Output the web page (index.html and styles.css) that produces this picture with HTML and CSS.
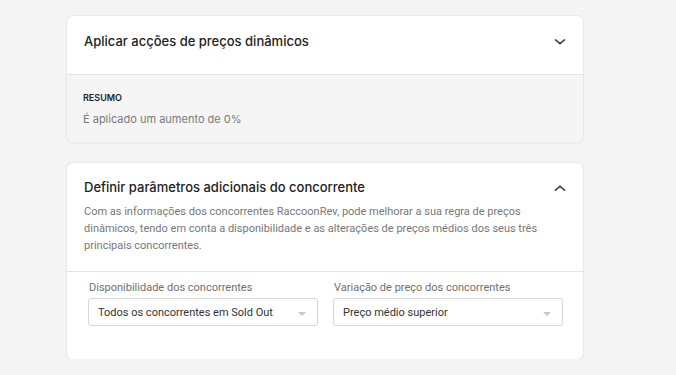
FILE: index.html
```html
<!DOCTYPE html>
<html lang="pt">
<head>
  <meta charset="UTF-8" />
  <meta name="viewport" content="width=device-width, initial-scale=1.0"/>
  <title>Preços dinâmicos</title>
  <link rel="stylesheet" href="styles.css">
</head>
<body>

  <div class="page">

    <div class="card">
      <div class="card-head card-head--tall">
        <h3>Aplicar acções de preços dinâmicos</h3>
        <svg class="chevron" width="12" height="8" viewBox="0 0 12 8">
          <path d="M1.5 1.8 L6 5.6 L10.5 1.8" fill="none" stroke="#444" stroke-width="1.6" stroke-linecap="round"/>
        </svg>
      </div>
      <div class="summary">
        <div class="summary-label">RESUMO</div>
        <div class="summary-text">É aplicado um aumento de 0%</div>
      </div>
    </div>

    <div class="card">
      <div class="card-head">
        <div class="head-row">
          <h3>Definir parâmetros adicionais do concorrente</h3>
          <svg class="chevron" width="12" height="8" viewBox="0 0 12 8">
            <path d="M1.5 6.2 L6 2.4 L10.5 6.2" fill="none" stroke="#444" stroke-width="1.6" stroke-linecap="round"/>
          </svg>
        </div>
        <p class="desc">Com as informações dos concorrentes RaccoonRev, pode melhorar a sua regra de preços dinâmicos, tendo em conta a disponibilidade e as alterações de preços médios dos seus três principais concorrentes.</p>
      </div>
      <div class="fields">
        <div class="field">
          <label>Disponibilidade dos concorrentes</label>
          <div class="select">
            <span>Todos os concorrentes em Sold Out</span>
            <i class="caret"></i>
          </div>
        </div>
        <div class="field">
          <label>Variação de preço dos concorrentes</label>
          <div class="select">
            <span>Preço médio superior</span>
            <i class="caret"></i>
          </div>
        </div>
      </div>
    </div>

  </div>

</body>
</html>
```

FILE: styles.css
```css
body {
  margin: 0;
  background: #f4f4f4;
  font-family: 'Inter', 'Roboto', sans-serif;
  color: #222;
}

.page {
  width: 516px;
  margin-left: 67px;
  padding-top: 16px;
  display: flex;
  flex-direction: column;
  gap: 21px;
}

.card {
  background: #fff;
  border-radius: 6px;
  box-shadow: 0 0 0 1px #e8e8e8, 0 1px 3px rgba(0, 0, 0, 0.08);
  overflow: hidden;
}

.card-head {
  padding: 16px 17px 17px;
  border-bottom: 1px solid #e3e3e3;
}

.card-head--tall {
  display: flex;
  justify-content: space-between;
  align-items: center;
  height: 59px;
  padding: 0 17px 7px;
  box-sizing: border-box;
}

.head-row {
  display: flex;
  justify-content: space-between;
  align-items: center;
}

h3 {
  margin: 0;
  font-size: 13px;
  font-weight: 500;
  line-height: 17px;
  color: #222;
}

.summary {
  background: #f5f5f5;
  padding: 17px 16px 16px;
  height: 67px;
  box-sizing: border-box;
}

.summary-label {
  font-size: 9px;
  font-weight: 600;
  line-height: 12px;
  color: #222;
}

.summary-text {
  margin-top: 8px;
  font-size: 11px;
  line-height: 14px;
  color: #7a7a7a;
}

.desc {
  margin: 7px 0 0;
  font-family: 'Roboto', sans-serif;
  font-size: 11px;
  line-height: 17px;
  color: #777;
}

.fields {
  display: flex;
  gap: 15px;
  padding: 9px 20px 33px 21px;
}

.field {
  flex: 1;
  display: flex;
  flex-direction: column;
  gap: 3px;
}

.field label {
  font-family: 'Roboto', sans-serif;
  font-size: 11px;
  line-height: 14px;
  color: #6f6f6f;
  padding-left: 1px;
}

.select {
  height: 28px;
  box-sizing: border-box;
  border: 1px solid #d6d6d6;
  border-radius: 3px;
  display: flex;
  align-items: center;
  justify-content: space-between;
  padding: 0 11px 0 9px;
  font-family: 'Roboto', sans-serif;
  font-size: 11px;
  color: #333;
}

.caret {
  width: 0;
  height: 0;
  border-left: 4px solid transparent;
  border-right: 4px solid transparent;
  border-top: 4px solid #c8c8c8;
  margin-top: 3px;
}
```
